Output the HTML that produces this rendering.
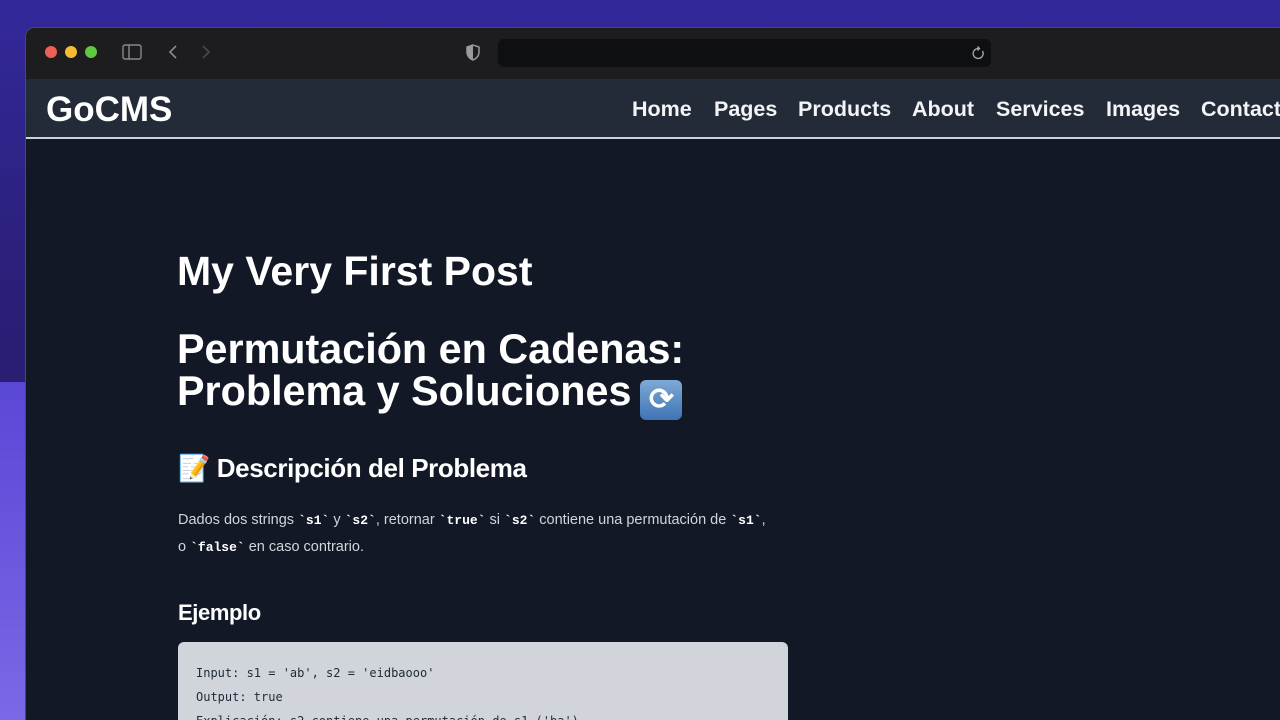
<!DOCTYPE html>
<html><head><meta charset="utf-8"><style>
*{margin:0;padding:0;box-sizing:border-box}
html{width:1280px;height:720px;overflow:hidden}
body{width:1280px;height:720px;overflow:hidden;position:relative;font-family:"Liberation Sans",sans-serif;
background:linear-gradient(180deg,#33289a 0%,#2a1f78 40%,#241a5c 100%);}
.lp{position:absolute;left:0;top:382px;width:30px;height:338px;background:linear-gradient(180deg,#5a47d6,#7a68e6)}
.win{position:absolute;left:25px;top:27px;width:1255px;height:693px;border-radius:10px 0 0 0;background:#121826;overflow:hidden;border:1px solid #4a4a5a;border-right:none;border-bottom:none}
.tb{position:absolute;left:0;top:0;right:0;height:51px;background:#1d1d1f}
.dot{position:absolute;top:18px;width:12px;height:12px;border-radius:50%}
.url{position:absolute;left:472px;top:11px;width:493px;height:28px;background:#0e0f11;border-radius:6px}
.nav{position:absolute;left:0;top:51px;right:0;height:60px;background:#222b37;border-bottom:2px solid #c9d1d9}
.t{position:absolute;color:#fff;font-weight:bold;white-space:nowrap}
.n{top:18px;font-size:21.5px;color:#f3f4f6}
p.b{position:absolute;left:152px;color:#d1d5db;font-size:14.5px;white-space:nowrap}
code{font-family:"Liberation Mono",monospace;font-weight:bold;color:#fff;font-size:13px}
.code{position:absolute;left:152px;top:614px;width:610px;height:79px;background:#d1d5db;border-radius:6px 6px 0 0;font-family:"DejaVu Sans Mono","Liberation Mono",monospace;font-size:12px;color:#1f2937;padding:19px 0 0 18px;line-height:24px;overflow:hidden}
</style></head><body>
<div class="lp"></div>
<div class="win">
 <div class="tb">
  <div class="dot" style="left:19px;background:#ee5f57"></div>
  <div class="dot" style="left:39px;background:#f5bd2f"></div>
  <div class="dot" style="left:59px;background:#5fc842"></div>
  <svg style="position:absolute;left:96px;top:16px" width="20" height="16" viewBox="0 0 20 16"><rect x="1" y="1" width="18" height="14" rx="2" fill="none" stroke="#8a8a8e" stroke-width="1.4"/><line x1="7" y1="1" x2="7" y2="15" stroke="#8a8a8e" stroke-width="1.4"/></svg>
  <svg style="position:absolute;left:142px;top:16px" width="10" height="16" viewBox="0 0 10 16"><path d="M8 2L2 8l6 6" fill="none" stroke="#8a8a8e" stroke-width="1.6"/></svg>
  <svg style="position:absolute;left:175px;top:16px" width="10" height="16" viewBox="0 0 10 16"><path d="M2 2l6 6-6 6" fill="none" stroke="#4a4a4e" stroke-width="1.6"/></svg>
  <svg style="position:absolute;left:440px;top:16px" width="14" height="17" viewBox="0 0 14 17"><path d="M7 1L1 3v5c0 4 3 7 6 8 3-1 6-4 6-8V3z" fill="none" stroke="#9a9a9e" stroke-width="1.5"/><path d="M7 1v15c-3-1-6-4-6-8V3z" fill="#9a9a9e"/></svg>
  <div class="url"><svg style="position:absolute;left:474px;top:7px" width="13" height="14" viewBox="0 0 13 14"><path d="M10.5 5A5 5 0 1 1 6.5 2.5" fill="none" stroke="#aaa" stroke-width="1.3"/><path d="M5.5 0.5l2 2-2 2" fill="none" stroke="#aaa" stroke-width="1.3"/></svg></div>
 </div>
 <div class="nav">
  <div class="t" style="left:20px;top:11px;font-size:35px">GoCMS</div>
  <div class="t n" style="left:606px">Home</div>
  <div class="t n" style="left:688px">Pages</div>
  <div class="t n" style="left:772px">Products</div>
  <div class="t n" style="left:886px">About</div>
  <div class="t n" style="left:970px">Services</div>
  <div class="t n" style="left:1080px">Images</div>
  <div class="t n" style="left:1175px">Contact</div>
 </div>
 <div class="t" style="left:151px;top:220px;font-size:41px">My Very First Post</div>
 <div class="t" style="left:151px;top:300px;font-size:41.3px;line-height:42px">Permutación en Cadenas:<br>Problema y Soluciones<span style="display:inline-block;margin-left:9px;width:42px;height:40px;vertical-align:-4px;background:linear-gradient(#7fa9d6,#3f74b4);border-radius:6px;font-size:30px;text-align:center;line-height:40px">⟳</span></div>
 <div class="t" style="left:152px;top:425px;font-size:26px;letter-spacing:-0.4px">📝 Descripción del Problema</div>
 <p class="b" style="top:484px">Dados dos strings <code>`s1`</code> y <code>`s2`</code>, retornar <code>`true`</code> si <code>`s2`</code> contiene una permutación de <code>`s1`</code>,</p>
 <p class="b" style="top:511px">o <code>`false`</code> en caso contrario.</p>
 <div class="t" style="left:152px;top:572px;font-size:22px;letter-spacing:-0.4px">Ejemplo</div>
 <div class="code">Input: s1 = 'ab', s2 = 'eidbaooo'<br>Output: true<br>Explicación: s2 contiene una permutación de s1 ('ba')</div>
</div>
</body></html>
